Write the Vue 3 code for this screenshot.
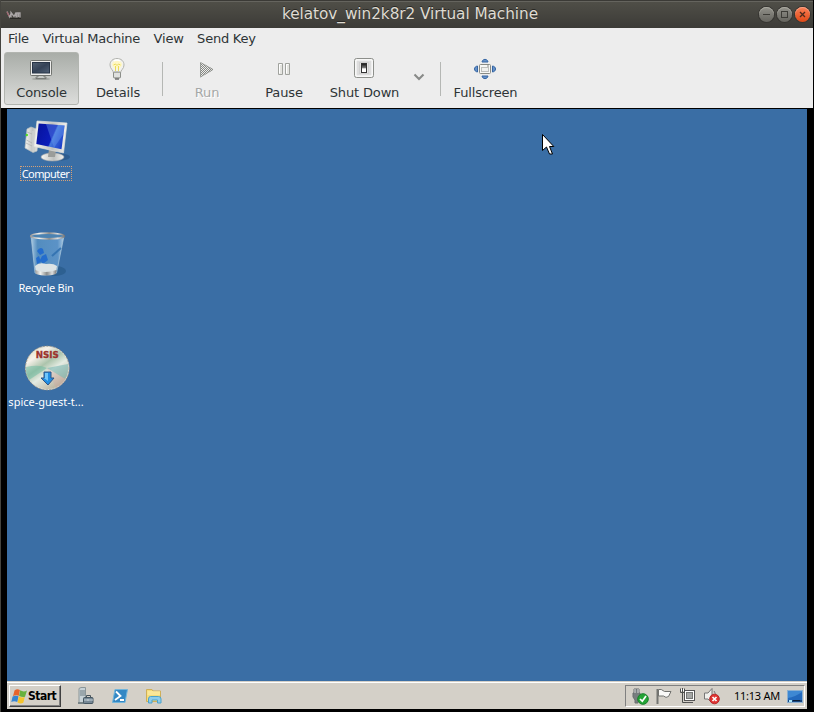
<script setup>
const menus = ['File', 'Virtual Machine', 'View', 'Send Key']
</script>

<template>
  <div class="window">
    <header class="titlebar">
      <svg class="vm-logo" width="16" height="10" viewBox="0 0 16 10"><path d="M1 1.5 3.5 7 5.5 2.5M5 7.5V2.5L8 6.5 10 2.5V7.5M11 7.5V3H14V7.5M12.5 3V7" fill="none" stroke="#aaa6a6" stroke-width="1.3" /><path d="M1 2 3 6" stroke="#a75a68" /><path d="M4 8.5H15" stroke="#282724" /></svg>
      <h1>kelatov_win2k8r2 Virtual Machine</h1>
      <div class="controls">
        <span class="control"><svg width="15" height="15" viewBox="0 0 15 15"><path d="M4 7.5H11" stroke="#3d3c37" /></svg></span>
        <span class="control"><svg width="15" height="15" viewBox="0 0 15 15"><rect x="4.5" y="4.5" width="6" height="6" fill="none" stroke="#3d3c37" /></svg></span>
        <span class="control close"><svg width="15" height="15" viewBox="0 0 15 15"><path d="M5 5 10 10M10 5 5 10" stroke="#4c2a1c" stroke-width="1.3" /></svg></span>
      </div>
    </header>
    <nav class="menubar"><span v-for="m in menus" :key="m">{{ m }}</span></nav>
    <section class="toolbar">
      <div class="tool console active">
        <svg width="24" height="24" viewBox="0 0 24 24"><defs><linearGradient id="cs" x1="0" y1="0" x2="1" y2="1"><stop stop-color="#536173" /><stop offset=".5" stop-color="#344256" /><stop offset="1" stop-color="#526277" /></linearGradient></defs><ellipse cx="12" cy="21" rx="9" ry="1" fill="#747873" opacity=".5" /><path d="M9 17.5H15V19H17V20.5H7V19H9Z" fill="#c5c8c5" stroke="#60635f" stroke-width=".7" /><rect x="1.5" y="2.5" width="21" height="15" rx="1" fill="#eeeeec" stroke="#70736f" /><rect x="3.5" y="4.5" width="17" height="10.5" fill="url(#cs)" stroke="#273446" /></svg>
        <b>Console</b>
      </div>
      <div class="tool details">
        <svg width="24" height="24" viewBox="0 0 24 24"><path d="M8.5 15C8.5 12 5 11 5 7C5 3 8 .5 12 .5S19 3 19 7C19 11 15.5 12 15.5 15Z" fill="#f2f2ee" stroke="#b2b3af" /><ellipse cx="12" cy="6.5" rx="5" ry="4" fill="#fff7c5" /><path d="M8.5 7 10.5 6 12 7.5 13.5 6 15.5 7M10.5 8V13M13.5 8V13" fill="none" stroke="#eadb58" stroke-width="1" /><path d="M9 3Q12 1 15 3" fill="none" stroke="#fff" stroke-width="1.5" /><rect x="8.5" y="14" width="7" height="6" rx="1" fill="#c6c8c5" stroke="#8b8e89" /><path d="M9 16H15M9 18H15" stroke="#f8f8f8" /><path d="M10 21H14" stroke="#666" stroke-width="1.4" /></svg>
        <b>Details</b>
      </div>
      <i class="separator" />
      <div class="tool run">
        <svg class="nudge" width="24" height="24" viewBox="0 0 24 24"><defs><pattern id="dots" width="2" height="2" patternUnits="userSpaceOnUse"><rect width="2" height="2" fill="#eeeeed" /><path d="M0 0H1V1H0ZM1 1H2V2H1Z" fill="#858783" /></pattern></defs><path d="M5 4 19 11.5 5 19.5Z" fill="url(#dots)" /><path d="M5.5 4.5 18 11.5 5.5 19Z" fill="none" stroke="#8d8f8b" stroke-width=".7" /></svg>
        <b>Run</b>
      </div>
      <div class="tool pause">
        <svg class="nudge" width="24" height="24" viewBox="0 0 24 24"><path d="M6.5 5.5H10.5V16.5H6.5ZM13.5 5.5H17.5V16.5H13.5Z" fill="#e4e4e0" stroke="#a1a39e" /><path d="M7.5 15.5V6.5H9.5M14.5 15.5V6.5H16.5" fill="none" stroke="#fff" /></svg>
        <b>Pause</b>
      </div>
      <div class="tool shutdown">
        <svg width="24" height="24" viewBox="0 0 24 24"><defs><linearGradient id="sw" x2="0" y2="1"><stop stop-color="#111" /><stop offset=".45" stop-color="#777" /><stop offset=".6" stop-color="#fff" /></linearGradient></defs><rect x="2.5" y=".5" width="19" height="19" rx="2" fill="#f1f1f0" stroke="#8d8f8b" /><rect x="4" y="2" width="16" height="16" rx="1" fill="#ddd" stroke="#fff" /><rect x="7.5" y="4.5" width="9" height="11" fill="#e6e6e6" stroke="#d0d0d0" /><rect x="9.5" y="5.5" width="5" height="9" fill="url(#sw)" stroke="#333" /></svg>
        <b>Shut Down</b>
      </div>
      <div class="arrow"><svg width="12" height="8" viewBox="0 0 12 8"><path d="M1.5 1.5 6 6 10.5 1.5" fill="none" stroke="#888a88" stroke-width="2.1" /></svg></div>
      <i class="separator" />
      <div class="tool fullscreen">
        <svg width="24" height="24" viewBox="0 0 24 24"><path d="M9 4C9.5.5 14.5.5 15 4ZM9 18C9.5 21.5 14.5 21.5 15 18ZM4.5 8C.5 8.5.5 13.5 4.5 14ZM19.5 8C23.5 8.5 23.5 13.5 19.5 14Z" fill="#6691c8" stroke="#3465a4" /><rect x="6.5" y="6.5" width="11" height="9" rx="1" fill="#f7f7f5" stroke="#888a85" /><rect x="8.5" y="9.5" width="7" height="4" fill="#f0f0ee" stroke="#bfc0bd" /><path d="M14 8H16" stroke="#888a85" /></svg>
        <b>Fullscreen</b>
      </div>
    </section>

    <main class="desktop">
      <div class="shortcuts">
        <div class="shortcut">
          <svg width="48" height="48" viewBox="0 0 48 48">
            <defs><linearGradient id="blue" x1="0" y1=".3" x2="1" y2=".7"><stop stop-color="#0713a0" /><stop offset=".55" stop-color="#0b1dbb" /><stop offset=".6" stop-color="#4478dd" /><stop offset="1" stop-color="#1839c9" /></linearGradient><linearGradient id="silver"><stop stop-color="#f7f7f3" /><stop offset=".55" stop-color="#bfc1bf" /><stop offset="1" stop-color="#f2f2ef" /></linearGradient></defs>
            <ellipse cx="33" cy="40" rx="14" ry="4" fill="#234f7d" opacity=".55" />
            <path d="M4 12 8 10 16 13 14 34 10 35.5 2 31Z" fill="url(#silver)" stroke="#b9c0c0" stroke-width=".7" />
            <path d="M4 15 9 17M3.5 23 9 26M3 26 9 29" stroke="#aaaead" stroke-width=".7" /><path d="M10 14V35" stroke="#d5d8d6" /><circle cx="3.8" cy="18" r="1.2" fill="#51df1d" />
            <ellipse cx="29.5" cy="40" rx="11.5" ry="4" fill="url(#silver)" stroke="#aaa" stroke-width=".6" /><path d="M26 32 33 33 32 40H25Z" fill="#9b9d9a" />
            <path d="M14 4 44 6 40.5 36 11 29.5Z" fill="url(#silver)" stroke="#dededb" stroke-width=".7" /><path d="M15.7 6.5 41.6 8.4 38.5 32.3 13.3 27Z" fill="url(#blue)" />
            <path d="M23 7 41.6 8.4 40.5 17 31 30.7Z" fill="#6fa0ee" opacity=".38" />
          </svg>
          <span class="focused computer-label">Computer</span>
        </div>
        <div class="shortcut">
          <svg width="48" height="48" viewBox="0 0 48 48">
            <defs><linearGradient id="glass"><stop stop-color="#c6dfef" stop-opacity=".85" /><stop offset=".2" stop-color="#5e9ac9" stop-opacity=".7" /><stop offset=".8" stop-color="#71aadd" stop-opacity=".6" /><stop offset="1" stop-color="#d2e8f5" stop-opacity=".8" /></linearGradient><linearGradient id="rim"><stop stop-color="#999" /><stop offset=".25" stop-color="#f2f2ef" /><stop offset=".55" stop-color="#8b8d8c" /><stop offset=".8" stop-color="#ddd" /><stop offset="1" stop-color="#777" /></linearGradient></defs>
            <ellipse cx="32" cy="40" rx="11" ry="5" fill="#245784" opacity=".6" /><path d="M8 5 12 42Q22 46 33.5 42L41 5Z" fill="url(#glass)" stroke="#aac8dc" stroke-width=".7" />
            <path d="M29 25 38 17" stroke="#2c6dae" stroke-width="2" opacity=".8" /><path d="M14 20Q17 15 20 18L21 22 17 24ZM19 25 23 23 25 29 20 33 17 29ZM13 27 16 25 18 31 14 33Z" fill="#1864d0" opacity=".8" />
            <path d="M12 35Q16 31 23 33 30 32 34 35L33 42Q22 45 13 42Z" fill="#dce3e5" /><path d="M12 39Q22 43 33.5 39L33 43Q23 46 13 43Z" fill="url(#rim)" />
            <ellipse cx="24.5" cy="5" rx="16.8" ry="2.8" fill="#4c83b2" stroke="url(#rim)" stroke-width="1.7" />
          </svg>
          <span class="bin-label">Recycle Bin</span>
        </div>
        <div class="shortcut">
          <svg width="48" height="48" viewBox="0 0 48 48">
            <defs><linearGradient id="disc" x1="0" y1="0" x2=".7" y2="1"><stop stop-color="#d4d9ba" /><stop offset=".27" stop-color="#f6f1e9" /><stop offset=".48" stop-color="#acc4ac" /><stop offset=".65" stop-color="#e4ebe2" /><stop offset="1" stop-color="#b7ae98" /></linearGradient></defs>
            <circle cx="24.3" cy="23" r="21.6" fill="url(#disc)" stroke="#e1e0d5" /><path d="M3 22Q16 19 24 23L6 35Q2 29 3 22Z" fill="#67b9a0" opacity=".5" /><path d="M24 23 45 19Q46 28 42 34Z" fill="#72b5b0" opacity=".55" /><path d="M24 23 33 43Q40 40 43 34Z" fill="#d4a3a0" opacity=".3" />
            <circle cx="24.3" cy="23" r="22" fill="none" stroke="#8a867e" stroke-dasharray="2 1.4" stroke-width=".8" /><text x="24.3" y="13.3" text-anchor="middle" textLength="23" lengthAdjust="spacingAndGlyphs" font-family="DejaVu Sans" font-size="8" font-weight="bold" fill="#9c332d" stroke="#9c332d" stroke-width=".3">NSIS</text><path d="M21 27H28V33H31L25 40 18 33H21Z" fill="#218de2" stroke="#315584" /><path d="M22 28H25V36L21 33H22Z" fill="#71c6fa" />
          </svg>
          <span class="spice-label">spice-guest-t...</span>
        </div>
      </div>
      <svg class="cursor" width="13" height="21" viewBox="0 0 13 21"><path d="M.5.5V16.5L4.5 13 7.5 20H10.5L7.5 12.5H11.8Z" fill="white" stroke="black" /></svg>
      <footer class="taskbar">
        <div class="start">
          <svg width="17" height="17" viewBox="0 0 17 17"><path d="M3.5 2.5Q6 .5 8.9 2L7.8 7.8Q4.5 6.5 2 8.3Z" fill="#e8642c" /><path d="M9.2 2.3Q12.5 4.5 16 2.5L14 8.8Q11 9.5 8.1 7.9Z" fill="#68b13d" /><path d="M1.6 8.6Q4.5 7 7.5 8.3L6.3 14Q3 12.5 .3 14Z" fill="#3684d1" /><path d="M7.8 8.4Q11 10.2 13.8 9.1L12.3 14.7Q9.5 16.3 6.5 14.4Z" fill="#f4c42d" /></svg>
          <strong>Start</strong>
        </div>
        <div class="launchers">
          <svg width="18" height="18" viewBox="0 0 18 18"><path d="M2 1.5 4 .5H8.5V15.5H2Z" fill="#c7d2d7" stroke="#8b9699" /><path d="M3 4H8M3 6H8M3 8H8" stroke="#6c7a80" /><path d="M1 16H9" stroke="#788487" stroke-width="2" /><path d="M9.5 10V8.5H13.5V10" fill="none" stroke="#46525a" /><rect x="6.5" y="10.5" width="9.5" height="6" rx="1" fill="#768895" stroke="#455661" /><path d="M7 13H16M11 12V14" stroke="#c4d0d7" /></svg>
          <svg width="18" height="18" viewBox="0 0 18 18"><path d="M4 2.5H16.5L14 15.5H1.5Z" fill="#3488c4" stroke="#70b5dc" /><path d="M5 4.5 9.5 9 4 13M9 13H13" fill="none" stroke="white" stroke-width="1.8" /></svg>
          <svg width="18" height="18" viewBox="0 0 18 18"><path d="M1.5 14.5V2.5H7L8 4H15.5V14.5Z" fill="#f6dc79" stroke="#cfaf58" /><path d="M2.5 5H15M2.5 7H15" stroke="#fff1b7" /><path d="M3.5 16V12Q3.5 9.5 5.5 9.5H13.5Q16 9.5 16 12V16H12.5V13H7V16Z" fill="#8dcceb" stroke="#4ba2cb" /></svg>
        </div>
        <div class="tray">
          <svg width="18" height="18" viewBox="0 0 18 18"><path d="M3 2H8V6H9V10L7 13V16H4V13L2 10V6H3Z" fill="#777d7e" stroke="#686d6e" /><path d="M4 2V6M7 2V6" stroke="#ddd" /><circle cx="12" cy="12" r="5.3" fill="#24a435" stroke="#17802a" /><path d="M9 12 11.3 14.2 15 9" fill="none" stroke="white" stroke-width="1.7" /></svg>
          <svg width="18" height="18" viewBox="0 0 18 18"><path d="M2.5 2V17" stroke="#737471" stroke-width="2" /><path d="M3.5 2.5Q6 1.5 9.5 4.5H16L13.5 9.5Q11 11.5 8.5 9H3.5Z" fill="#fafaf8" stroke="#71726f" /></svg>
          <svg width="18" height="18" viewBox="0 0 18 18"><rect x="5.5" y="3.5" width="10" height="10" fill="#fff" stroke="#555" /><rect x="7.5" y="5.5" width="6" height="6" fill="#a5a7a5" stroke="#757775" /><path d="M7 15.5H14" stroke="#555" /><path d="M1.5 1.5V5.5H5.5V1.5M3.5 1V5M3.5 6V15.5H7" fill="none" stroke="#4c4e4c" /><path d="M2.5 2V4M4.5 2V4" stroke="#fff" /></svg>
          <svg width="18" height="18" viewBox="0 0 18 18"><path d="M1.5 6H5L9 1.5V16L5 12H1.5Z" fill="#f0f0ed" stroke="#777" /><path d="M11 4Q13 6 12 9" fill="none" stroke="#777" /><circle cx="11.5" cy="12" r="4.8" fill="#e03431" stroke="#b7282a" /><path d="M9.5 10 13.5 14M13.5 10 9.5 14" stroke="white" stroke-width="1.7" /></svg>
          <time>11:13 AM</time>
          <svg class="show-desktop" width="17" height="15" viewBox="0 0 17 15"><rect x=".5" y="1.5" width="15" height="12" fill="#2369bd" stroke="#8bafd0" /><path d="M1 9Q8 8 15 3V2H1Z" fill="#509ce1" opacity=".6" /><path d="M1 11H15V13H1Z" fill="#174580" /><path d="M2 12H5" stroke="#a8e5f9" stroke-width="2" /><path d="M6 11.5H13" stroke="#091d36" /></svg>
        </div>
      </footer>
    </main>
  </div>
</template>

<style>
body { margin: 0; background: #000; }
</style>
<style scoped>
* { box-sizing: border-box; }
svg { display: block; flex: none; }
.window { width: 814px; height: 712px; background: #000; border-left: 1px solid #45443f; border-right: 1px solid #000; font-family: "DejaVu Sans", sans-serif; font-size: 13px; color: #2e3436; overflow: hidden; }
.titlebar { display: grid; grid-template-columns: 58px 1fr 58px; align-items: center; height: 28px; background: linear-gradient(#504f48, #3c3b37); border-top: 1px solid #3b3a36; box-shadow: inset 0 1px #65645e; }
.vm-logo { margin-left: 5px; }
h1 { margin: 0; padding: 0 0 1px 6px; text-align: center; font: 15.3px/24px "DejaVu Sans", sans-serif; letter-spacing: -.06px; color: #dfdbd2; white-space: nowrap; text-shadow: 0 -1px #292824; }
.controls { display: flex; gap: 3px; padding-left: 4px; }
.control { width: 15px; height: 15px; border-radius: 50%; background: linear-gradient(#92918a, #65645e); box-shadow: 0 0 0 1px #373632, inset 0 1px #aaa9a0; }
.close { background: linear-gradient(#fb8057, #df4916); box-shadow: 0 0 0 1px #373632, inset 0 1px #f7a184; }
.menubar { display: flex; align-items: center; gap: 13.5px; height: 22px; padding: 0 0 2px 7px; background: #ededed; letter-spacing: -.22px; white-space: nowrap; }
.toolbar { display: flex; height: 58px; padding: 2px 0 3px 3px; background: #ededed; }
.tool { display: flex; flex-direction: column; align-items: center; height: 53px; padding-top: 6px; flex: none; }
.tool b { font-weight: 400; line-height: 16px; margin-top: 3px; letter-spacing: -.15px; white-space: nowrap; }
.tool svg { position: relative; left: -1px; }
.tool svg.nudge { left: 0; }
.console, .fullscreen { width: 75px; }
.details { width: 78px; margin-right: -1px; }
.pause { width: 78px; }
.shutdown { width: 83px; }
.run { width: 76px; color: #a6a8a7; text-shadow: 1px 1px #fff; }
.active { border: 1px solid #b2b5b0; border-radius: 3px; background: linear-gradient(#a9ada8, #dcdddb); padding-top: 5px; }
.separator { width: 1px; height: 34px; margin: 10px 6px 0; background: #b5b7b4; flex: none; }
.arrow { width: 27px; padding: 21px 0 0 7px; }
.arrow + .separator { margin-left: 7px; margin-right: 7px; }
.desktop { display: flex; flex-direction: column; justify-content: space-between; position: relative; width: 800px; height: 600px; margin: 1px 0 0 6px; background: #3a6ea5; font-family: "DejaVu Sans Condensed", "DejaVu Sans", sans-serif; font-size: 11px; }
.shortcuts { display: grid; grid-template-columns: 78px; grid-auto-rows: 114px; padding-top: 8px; color: #fff; }
.shortcut { display: flex; flex-direction: column; align-items: center; white-space: nowrap; }
.shortcut svg { margin-left: 2px; }
.shortcut span { height: 15px; line-height: 13px; margin-top: 1px; font-family: "Noto Sans", sans-serif; border: 1px dotted transparent; padding: 0 1px; }
.shortcut .focused { border-color: #d5a178; }
.shortcut .computer-label { letter-spacing: -.58px; padding-right: 2px; }
.bin-label { letter-spacing: -.25px; }
.shortcut .spice-label { padding: 0; letter-spacing: 0; }
.cursor { position: absolute; left: 535px; top: 25px; }
.taskbar { display: flex; align-items: center; height: 28px; padding: 2px 2px 0; background: #d4d0c8; box-shadow: inset 0 1px #d4d0c8, inset 0 2px #fff; color: #000; }
.start { display: flex; align-items: center; width: 52px; height: 22px; padding-left: 1px; border: 1px solid; border-color: #fff #404040 #404040 #fff; box-shadow: inset -1px -1px #808080; }
.start strong { font-family: "DejaVu Sans Condensed", sans-serif; font-size: 12px; letter-spacing: -.5px; }
.launchers { display: flex; gap: 16px; margin-left: 16px; }
.tray { display: flex; align-items: center; width: 180px; height: 22px; margin-left: auto; padding-left: 5px; gap: 6px; border: 1px solid; border-color: #808080 #fff #fff #808080; }
time { width: 47px; margin-left: 7px; padding-bottom: 1px; font-family: "Noto Sans", sans-serif; letter-spacing: -.25px; white-space: nowrap; }
</style>
